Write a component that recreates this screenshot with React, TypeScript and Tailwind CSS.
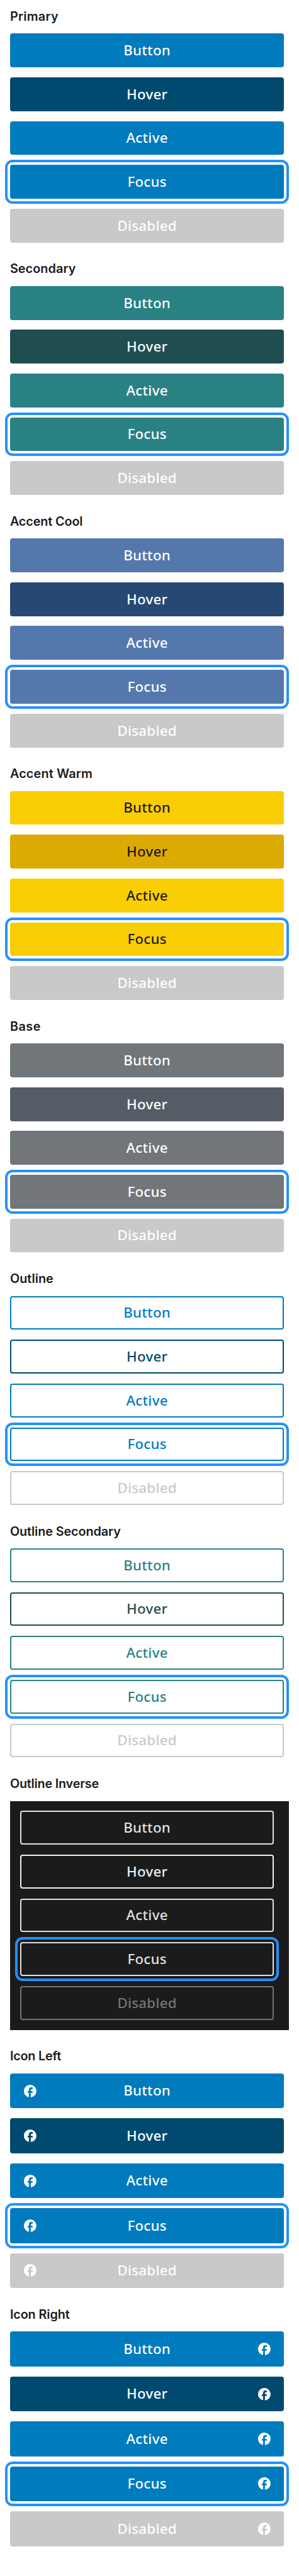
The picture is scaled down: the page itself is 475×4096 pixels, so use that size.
import clsx from "clsx";

type State = "Button" | "Hover" | "Active" | "Focus" | "Disabled";
type IconSide = "left" | "right";

interface Variant {
  title: string;
  tracking: string;
  base: string;
  hover: string;
  disabled: string;
  icon?: IconSide;
  inverse?: boolean;
}

const STATES: State[] = ["Button", "Hover", "Active", "Focus", "Disabled"];

const SOLID_DISABLED = "bg-[#c9c9c9] text-white";
const OUTLINE_DISABLED = "border-2 border-[#c9c9c9] text-[#c9c9c9]";

const VARIANTS: Variant[] = [
  {
    title: "Primary",
    tracking: "tracking-[0.3px]",
    base: "bg-[#007bbd] text-white",
    hover: "bg-[#004a70] text-white",
    disabled: SOLID_DISABLED,
  },
  {
    title: "Secondary",
    tracking: "tracking-[0.09px]",
    base: "bg-[#2a8184] text-white",
    hover: "bg-[#204d50] text-white",
    disabled: SOLID_DISABLED,
  },
  {
    title: "Accent Cool",
    tracking: "tracking-[-0.11px]",
    base: "bg-[#5478ac] text-white",
    hover: "bg-[#274873] text-white",
    disabled: SOLID_DISABLED,
  },
  {
    title: "Accent Warm",
    tracking: "tracking-[0.18px]",
    base: "bg-[#face04] text-[#1b1b1b]",
    hover: "bg-[#ddaa01] text-[#1b1b1b]",
    disabled: SOLID_DISABLED,
  },
  {
    title: "Base",
    tracking: "tracking-[0.5px]",
    base: "bg-[#71767a] text-white",
    hover: "bg-[#565c65] text-white",
    disabled: SOLID_DISABLED,
  },
  {
    title: "Outline",
    tracking: "tracking-[0.07px]",
    base: "border-2 border-[#007bbd] text-[#007bbd]",
    hover: "border-2 border-[#004a70] text-[#004a70]",
    disabled: OUTLINE_DISABLED,
  },
  {
    title: "Outline Secondary",
    tracking: "tracking-[-0.08px]",
    base: "border-2 border-[#2a8184] text-[#2a8184]",
    hover: "border-2 border-[#204d50] text-[#204d50]",
    disabled: OUTLINE_DISABLED,
  },
  {
    title: "Outline Inverse",
    tracking: "tracking-[-0.2px]",
    base: "border-2 border-[#dfe1e2] text-[#dfe1e2]",
    hover: "border-2 border-[#f0f0f0] text-[#f0f0f0]",
    disabled: "border-2 border-[#71767a] text-[#71767a]",
    inverse: true,
  },
  {
    title: "Icon Left",
    tracking: "tracking-[-0.2px]",
    base: "bg-[#007bbd] text-white",
    hover: "bg-[#004a70] text-white",
    disabled: SOLID_DISABLED,
    icon: "left",
  },
  {
    title: "Icon Right",
    tracking: "tracking-[-0.1px]",
    base: "bg-[#007bbd] text-white",
    hover: "bg-[#004a70] text-white",
    disabled: SOLID_DISABLED,
    icon: "right",
  },
];

function FacebookIcon() {
  return (
    <svg viewBox="0 0 24 24" fill="currentColor" className="size-[23.8px]" aria-hidden="true">
      <path d="M22 12c0-5.52-4.48-10-10-10S2 6.48 2 12c0 4.84 3.44 8.87 8 9.8V15H8v-3h2V9.5C10 7.57 11.57 6 13.5 6H16v3h-2c-.55 0-1 .45-1 1v2h3v3h-3v6.95c5.05-.5 9-4.76 9-9.95z" />
    </svg>
  );
}

function StateButton({ state, variant }: { state: State; variant: Variant }) {
  const colors =
    state === "Hover" ? variant.hover : state === "Disabled" ? variant.disabled : variant.base;
  return (
    <button
      type="button"
      disabled={state === "Disabled"}
      className={clsx(
        "mb-[15.875px] w-full rounded-[4px] text-center font-['Noto_Sans',sans-serif] text-[22.22px] leading-[22.22px] font-medium tracking-[0.3px]",
        variant.icon
          ? "grid h-[55.563px] grid-cols-[23.8px_1fr_23.8px] items-center px-[19.84px]"
          : "flex h-[53.766px] items-center justify-center",
        state === "Focus" && "outline-4 outline-offset-4 outline-[#2491ff]",
        colors,
      )}
    >
      {variant.icon ? (
        <>
          <span>{variant.icon === "left" && <FacebookIcon />}</span>
          <span>{state}</span>
          <span>{variant.icon === "right" && <FacebookIcon />}</span>
        </>
      ) : (
        state
      )}
    </button>
  );
}

function Section({ variant }: { variant: Variant }) {
  return (
    <section>
      <h4
        className={clsx(
          "h-[53.266px] pt-[13.7px] font-['Inter',sans-serif] text-[19.8px] leading-[24px] font-semibold text-[#1b1b1b]",
          variant.tracking,
        )}
      >
        {variant.title}
      </h4>
      <div
        className={clsx(
          "flex flex-col",
          variant.inverse
            ? "mb-[15.875px] w-[443.4px] bg-[#1b1b1b] pt-[15.875px] pr-[23.81px] pl-[15.875px]"
            : "w-[435.5px]",
        )}
      >
        {STATES.map((state) => (
          <StateButton key={state} state={state} variant={variant} />
        ))}
      </div>
    </section>
  );
}

export default function App() {
  return (
    <main className="min-h-[4096px] w-[475px] bg-white pl-[15.875px]">
      {VARIANTS.map((variant) => (
        <Section key={variant.title} variant={variant} />
      ))}
    </main>
  );
}
